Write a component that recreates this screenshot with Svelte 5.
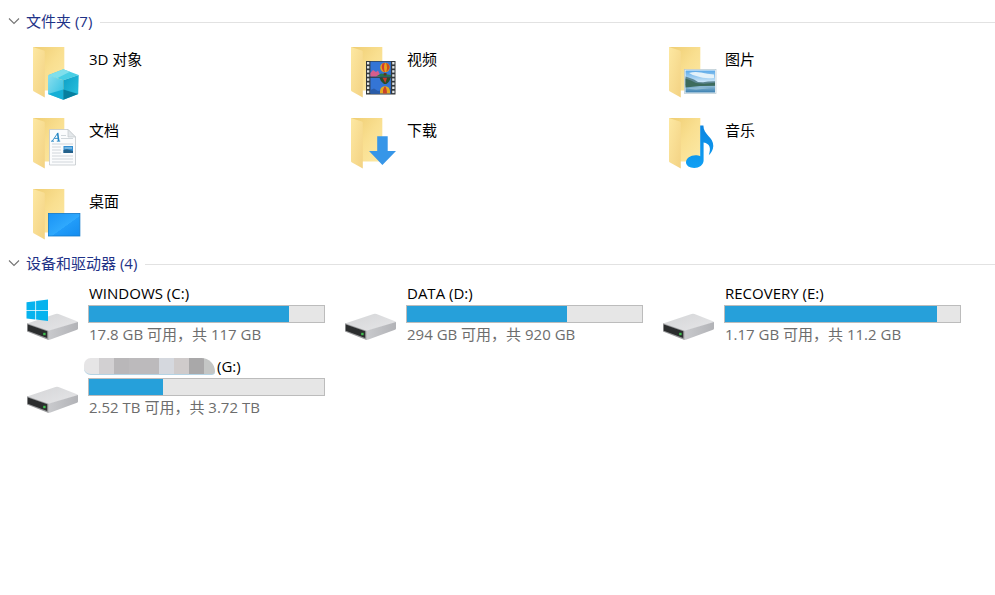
<script>
  let folders_open = $state(true);
  let drives_open = $state(true);

  const folders = [
    { name: "3D 对象", icon: "cube" },
    { name: "视频", icon: "video" },
    { name: "图片", icon: "picture" },
    { name: "文档", icon: "document" },
    { name: "下载", icon: "download" },
    { name: "音乐", icon: "music" },
    { name: "桌面", icon: "desktop" },
  ];

  const drives = [
    { name: "WINDOWS (C:)", used: 85, detail: "17.8 GB 可用，共 117 GB", system: true },
    { name: "DATA (D:)", used: 68, detail: "294 GB 可用，共 920 GB" },
    { name: "RECOVERY (E:)", used: 90, detail: "1.17 GB 可用，共 11.2 GB" },
    { name: "(G:)", used: 31.5, detail: "2.52 TB 可用，共 3.72 TB", masked: true },
  ];

  const film_holes = [0, 1, 2, 3, 4, 5, 6, 7];
</script>

<svelte:head>
  <title>此电脑</title>
</svelte:head>

<!-- gradients shared by the icons -->
<svg class="defs" aria-hidden="true">
  <defs>
    <linearGradient id="back" x1="0" y1="0" x2="1" y2="1">
      <stop offset="0" stop-color="#efcd72" />
      <stop offset="0.5" stop-color="#f9df90" />
      <stop offset="1" stop-color="#fce9a6" />
    </linearGradient>
    <linearGradient id="flap" x1="0" y1="0" x2="1" y2="1">
      <stop offset="0" stop-color="#fde8a2" />
      <stop offset="1" stop-color="#f3d283" />
    </linearGradient>
    <linearGradient id="cube-left" x1="0" y1="0" x2="1" y2="1">
      <stop offset="0" stop-color="#8adeee" />
      <stop offset="1" stop-color="#2bbfe2" />
    </linearGradient>
    <linearGradient id="cube-right" x1="0" y1="0" x2="1" y2="1">
      <stop offset="0" stop-color="#0d9fc6" />
      <stop offset="1" stop-color="#2cc3e0" />
    </linearGradient>
    <linearGradient id="sky" x1="0" y1="0" x2="0" y2="1">
      <stop offset="0" stop-color="#5ba9e8" />
      <stop offset="1" stop-color="#e4f3fb" />
    </linearGradient>
    <linearGradient id="lake" x1="0" y1="0" x2="0" y2="1">
      <stop offset="0" stop-color="#a9cde0" />
      <stop offset="1" stop-color="#3a7fb0" />
    </linearGradient>
    <linearGradient id="note" x1="0" y1="0" x2="0" y2="1">
      <stop offset="0" stop-color="#0a84e0" />
      <stop offset="1" stop-color="#10a0f4" />
    </linearGradient>
    <linearGradient id="screen" x1="0" y1="0" x2="1" y2="1">
      <stop offset="0" stop-color="#1a93f5" />
      <stop offset="0.55" stop-color="#2fa9fd" />
      <stop offset="0.56" stop-color="#219cf9" />
      <stop offset="1" stop-color="#148cef" />
    </linearGradient>
    <linearGradient id="drive-top" x1="0" y1="0" x2="1" y2="1">
      <stop offset="0" stop-color="#d4d5d7" />
      <stop offset="1" stop-color="#e6e6e8" />
    </linearGradient>
    <linearGradient id="drive-side" x1="0" y1="0" x2="1" y2="0">
      <stop offset="0" stop-color="#c9cacd" />
      <stop offset="1" stop-color="#b2b3b7" />
    </linearGradient>
  </defs>
</svg>

{#snippet chevron(open)}
  <svg class="chevron" class:closed={!open} viewBox="0 0 12 12" aria-hidden="true">
    <path d="M1 3.5 L6 8.5 L11 3.5" fill="none" stroke="#747474" stroke-width="1.1" />
  </svg>
{/snippet}

{#snippet folder_icon(kind)}
  <svg class="icon" viewBox="0 0 60 60" aria-hidden="true">
    <path d="M9 3 H40.3 V46.5 H20 Z" fill="url(#back)" />
    <path d="M9 3 L19.8 6.6 Q20.8 7 20.8 8 V53.5 L10 47.5 Q9 47 9 46 Z" fill="url(#flap)" />
    {#if kind === "cube"}
      <path d="M39.3 25.3 L54.7 31 L39.3 36.3 L24 31.2 Z" fill="#49cfe5" />
      <path d="M39.3 25.3 L46 27.8 L33 34.2 L24 31.2 Z" fill="#7fdfec" />
      <path d="M24 31.2 L39.3 36.3 V55.7 L24 50 Z" fill="url(#cube-left)" />
      <path d="M24 50 L39.3 45.5 V55.7 Z" fill="#16afd6" />
      <path d="M54.7 31 L39.3 36.3 V55.7 L54.2 50 Z" fill="url(#cube-right)" />
      <path d="M39.3 45.5 L54.2 50 L39.3 55.7 Z" fill="#067f9f" />
    {:else if kind === "video"}
      <rect x="24" y="17" width="29.5" height="33.5" fill="#32373b" />
      {#each film_holes as hole}
        <rect x="25" y={18 + hole * 4.1} width="2.3" height="2.4" fill="#e1e5e6" />
        <rect x="50.2" y={18 + hole * 4.1} width="2.3" height="2.4" fill="#e1e5e6" />
      {/each}
      <rect x="28.4" y="17.6" width="20.5" height="14.8" fill="#3475d5" />
      <rect x="28.4" y="33.8" width="20.5" height="15.8" fill="#3475d5" />
      <path d="M28.4 29 L31 26 L34 28 L36 26.5 L38 31 V32.4 H28.4 Z" fill="#d75d8c" />
      <path d="M34 32.4 L39 29.5 L48.9 31 V32.4 Z" fill="#22784b" />
      <path d="M28.4 46 L32 44.5 L36 47 L48.9 44 V49.6 H28.4 Z" fill="#2a5ca9" />
      <circle cx="43" cy="23.5" r="4.8" fill="#e5a51d" />
      <path d="M40.5 19.5 Q38.5 24 42 28 L43 28.2 Q41 23 43 18.7 Z" fill="#d63b2c" />
      <path d="M44 18.8 Q46 24 44 28 L46 26.5 Q49 23 46.2 20 Z" fill="#ce4d1c" />
      <rect x="41.7" y="29.1" width="2.8" height="2.4" fill="#5c351c" />
      <path d="M37.5 33.8 H48.5 Q48 37.5 44.3 40 H42 Q38.2 37.5 37.5 33.8 Z" fill="#294c2b" />
      <path d="M40.5 33.8 H45 L43.4 39 Z" fill="#c83929" />
      <path d="M38 49.6 V46.5 Q39 42.3 43 42.3 T48 46.5 V49.6 Z" fill="#e4aa21" />
      <path d="M41 49.6 V46 Q42 43 43 42.3 Q45 44.5 45 49.6 Z" fill="#c8432a" />
    {:else if kind === "picture"}
      <rect x="24.5" y="25.5" width="31.5" height="24" fill="#f7fbfd" stroke="#b4c6d1" stroke-width="0.7" />
      <rect x="25.5" y="26.5" width="29.5" height="14" fill="url(#sky)" />
      <rect x="25.5" y="40" width="29.5" height="8.5" fill="url(#lake)" />
      <path d="M29 29 Q35 27 41 28.6 T54 30.5 L54 34 Q44 35 38 32.5 Q32 31 29 29 Z" fill="#e4f2fa" />
      <path d="M25.5 32.5 L30 34 L34 35.5 L38 38 L43 38.2 L48 37.5 L55 37.2 V41.5 H25.5 Z" fill="#5c8591" />
      <path d="M25.5 34.5 L31 36.5 L36 39 L44 39.7 L55 38.8 V41.8 L40 42 L25.5 43.6 Z" fill="#3d6b5c" />
      <path d="M25.5 44.5 L39 43.2 L51 44 L36 45.8 Z" fill="#a4c9dc" opacity="0.6" />
    {:else if kind === "document"}
      <path d="M25.5 14.5 H44 L51.5 22 V50 H25.5 Z" fill="#fbfcfd" stroke="#c3c8cc" stroke-width="0.8" />
      <path d="M44 14.5 V22 H51.5 Z" fill="#e3e7ea" stroke="#c3c8cc" stroke-width="0.7" />
      <path d="M37 20.5 H42 M37 23.5 H49 M28 29 H49 M28 32 H37 M28 35 H37 M28 38 H37 M28 41 H49 M28 44 H49 M28 47 H49" stroke="#ccd2d7" stroke-width="0.9" />
      <path d="M28.3 26 L33.6 18.3 M30.3 23.4 H34.3 M27 26.2 H30 M32.8 26.2 H36.2" fill="none" stroke="#2487c5" stroke-width="0.9" />
      <path d="M33.6 17.8 L34.7 26" stroke="#2487c5" stroke-width="1.6" />
      <rect x="39.5" y="31" width="9.5" height="7" fill="#348fd2" />
      <path d="M39.5 35 L43 34.2 L49 36 V38 H39.5 Z" fill="#25618a" />
      <path d="M40.5 33 H48" stroke="#b7dff3" stroke-width="1" />
    {:else if kind === "download"}
      <path d="M35.2 21.3 H45.7 V36 H54 L40.4 50 L27 36 H35.2 Z" fill="#3796e8" />
    {:else if kind === "music"}
      <path d="M40.2 10.5 H43.4 C43.4 20 53.5 22 53.3 31 C53.1 34.8 51.5 37.7 48.8 40.2 C51.3 33 49.8 28.8 43.6 27.6 V45.5 C43.6 50 39 53 34.3 53 C29.6 53 26 50.7 26 47.3 C26 43.3 30.5 40.3 35.5 40.3 C37.3 40.3 39 40.7 40.2 41.3 Z" fill="url(#note)" />
    {:else if kind === "desktop"}
      <rect x="24.4" y="27.4" width="31.5" height="22.6" fill="url(#screen)" stroke="#1179ca" stroke-width="0.8" />
    {/if}
  </svg>
{/snippet}

{#snippet drive_icon(system)}
  <svg class="icon" viewBox="0 0 60 60" aria-hidden="true">
    <path d="M3 37.5 L31.5 28 Q33 27.5 34.5 28 L53 35.2 Q54 35.6 54 36.5 L25 45 Z" fill="url(#drive-top)" />
    <path d="M24.3 44.8 L54 36 V42.4 Q54 43.3 53 43.7 L26.5 53.4 L24.3 54 Z" fill="url(#drive-side)" />
    <path d="M3 37.3 L24.5 44.7 V54 L3 45.6 Z" fill="#98999b" />
    <path d="M3.8 38.6 L23.2 45.2 V52 L3.8 44.7 Z" fill="#2b2d2e" />
    <rect x="19.2" y="46.8" width="2.4" height="2.4" fill="#3fc04e" />
    {#if system}
      <path d="M2.5 16.3 L11.3 15.2 V24 H2.5 Z M12.1 15 L24 13.6 V24 H12.1 Z M2.5 24.8 H11.3 V33.6 L2.5 32.5 Z M12.1 24.8 H24 V35 L12.1 33.6 Z" fill="#06b3ee" />
    {/if}
  </svg>
{/snippet}

<main>
  <section>
    <h2>
      <button class="group" aria-expanded={folders_open} onclick={() => folders_open = !folders_open}>
        {@render chevron(folders_open)}
        <span>文件夹 ({folders.length})</span>
      </button>
    </h2>
    {#if folders_open}
      <div class="tiles">
        {#each folders as folder}
          <button class="tile folder">
            {@render folder_icon(folder.icon)}
            <span class="name">{folder.name}</span>
          </button>
        {/each}
      </div>
    {/if}
  </section>

  <section>
    <h2>
      <button class="group" aria-expanded={drives_open} onclick={() => drives_open = !drives_open}>
        {@render chevron(drives_open)}
        <span>设备和驱动器 ({drives.length})</span>
      </button>
    </h2>
    {#if drives_open}
      <div class="tiles">
        {#each drives as drive}
          <button class="tile drive">
            {@render drive_icon(drive.system)}
            <span class="info">
              <span class="name">
                {#if drive.masked}
                  <span class="mask"></span>
                {/if}
                {drive.name}
              </span>
              <span class="bar"><span class="used" style="width: {drive.used}%;"></span></span>
              <span class="detail">{drive.detail}</span>
            </span>
          </button>
        {/each}
      </div>
    {/if}
  </section>
</main>

<style>
  :global(body) {
    background: #fff;
  }

  main {
    padding-top: 11px;
    font-family: "Open Sans", "Noto Sans CJK SC", sans-serif;
    font-size: 15px;
    color: #000;
  }

  button {
    padding: 0;
    border: none;
    background: none;
    font: inherit;
    color: inherit;
    text-align: left;
  }

  .defs {
    position: absolute;
    width: 0;
    height: 0;
  }

  h2 {
    display: flex;
    align-items: center;
    gap: 8px;
    margin: 0;
    padding-left: 8px;
    font-size: 15px;
    font-weight: normal;
    line-height: 20px;
    color: #1e3287;
  }

  h2::after {
    content: "";
    flex: 1;
    height: 1px;
    background: #e2e2e2;
  }

  .group {
    display: flex;
    align-items: center;
    gap: 6px;
    padding-bottom: 2px;
  }

  .chevron {
    width: 12px;
    height: 12px;
  }

  .chevron.closed {
    transform: rotate(-90deg);
  }

  .tiles {
    display: grid;
    grid-template-columns: repeat(auto-fill, 318px);
    padding: 7px 0 0 24px;
  }

  .tile {
    display: flex;
    align-items: flex-start;
    gap: 4px;
  }

  .folder {
    height: 71px;
  }

  .drive {
    height: 73px;
  }

  .icon {
    flex: none;
    width: 60px;
    height: 60px;
    margin-top: 4px;
  }

  .folder .name {
    padding: 9px 0 0 1px;
    line-height: 20px;
  }

  .info {
    display: flex;
    flex-direction: column;
    width: 237px;
    padding-top: 1px;
    line-height: 20px;
  }

  .drive .name {
    display: flex;
    align-items: center;
    gap: 2px;
    padding-left: 1px;
  }

  .bar {
    box-sizing: border-box;
    height: 18px;
    margin: 2px 0 1px;
    border: 1px solid #bcbcbc;
    background: #e6e6e6;
  }

  .used {
    display: block;
    height: 100%;
    background: #26a0da;
  }

  .detail {
    padding-left: 1px;
    color: #6d6d6d;
  }

  /* hides the label of the volume */
  .mask {
    box-sizing: border-box;
    width: 131px;
    height: 17px;
    margin-left: -5px;
    border-bottom: 1px solid #b4d3e4;
    border-radius: 8px 16px 4px 8px;
    background: linear-gradient(
      90deg,
      #e6e5e6 0 15px,
      #d2d0d2 15px 30px,
      #b9b7b9 30px 45px,
      #bcbabc 45px 75px,
      #d5d8de 75px 90px,
      #cfcbcb 90px 105px,
      #a9a8a9 105px 120px,
      #c4c6c5 120px
    );
  }
</style>
